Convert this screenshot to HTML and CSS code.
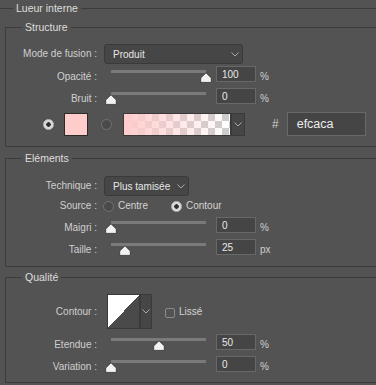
FILE: index.html
```html
<!DOCTYPE html>
<html>
<head>
    <title>Lueur interne</title>
    <link rel="stylesheet" href="styles.css">
</head>
<body>
    <fieldset class="panel">
        <legend>Lueur interne</legend>

        <!-- Structure -->
        <fieldset class="group group-structure">
            <legend>Structure</legend>

            <div class="row row-select">
                <span class="label">Mode de fusion :</span>
                <div class="select select-wide">
                    <span>Produit</span>
                    <svg width="8" height="5"><path d="M0.5 0.5 L4 4 L7.5 0.5" stroke="#a9a9a9" fill="none"/></svg>
                </div>
            </div>

            <div class="row row-slider">
                <span class="label">Opacité :</span>
                <div class="slider">
                    <div class="track"></div>
                    <span class="thumb" style="left: 100%;"><svg width="12" height="11"><path d="M6 0.8 L11.3 6 V10.4 H0.7 V6 Z" fill="#f2f2f2" stroke="#2e2e2e" stroke-width="0.8" stroke-linejoin="round"/></svg></span>
                </div>
                <div class="field">100</div>
                <span class="unit">%</span>
            </div>

            <div class="row row-slider">
                <span class="label">Bruit :</span>
                <div class="slider">
                    <div class="track"></div>
                    <span class="thumb" style="left: 0%;"><svg width="12" height="11"><path d="M6 0.8 L11.3 6 V10.4 H0.7 V6 Z" fill="#f2f2f2" stroke="#2e2e2e" stroke-width="0.8" stroke-linejoin="round"/></svg></span>
                </div>
                <div class="field">0</div>
                <span class="unit">%</span>
            </div>

            <div class="row row-color">
                <span class="radio radio-on"></span>
                <span class="swatch"></span>
                <span class="radio radio-off"></span>
                <span class="gradient"></span>
                <span class="chev-box"><svg width="8" height="5"><path d="M0.5 0.5 L4 4 L7.5 0.5" stroke="#a9a9a9" fill="none"/></svg></span>
                <span class="hash">#</span>
                <div class="hex">efcaca</div>
            </div>
        </fieldset>

        <!-- Eléments -->
        <fieldset class="group group-elements">
            <legend>Eléments</legend>

            <div class="row row-select">
                <span class="label">Technique :</span>
                <div class="select select-short">
                    <span>Plus tamisée</span>
                    <svg width="8" height="5"><path d="M0.5 0.5 L4 4 L7.5 0.5" stroke="#a9a9a9" fill="none"/></svg>
                </div>
            </div>

            <div class="row row-radio">
                <span class="label">Source :</span>
                <span class="radio radio-off"></span>
                <span class="opt opt-first">Centre</span>
                <span class="radio radio-on"></span>
                <span class="opt">Contour</span>
            </div>

            <div class="row row-slider">
                <span class="label">Maigri :</span>
                <div class="slider">
                    <div class="track"></div>
                    <span class="thumb" style="left: 0%;"><svg width="12" height="11"><path d="M6 0.8 L11.3 6 V10.4 H0.7 V6 Z" fill="#f2f2f2" stroke="#2e2e2e" stroke-width="0.8" stroke-linejoin="round"/></svg></span>
                </div>
                <div class="field">0</div>
                <span class="unit">%</span>
            </div>

            <div class="row row-slider">
                <span class="label">Taille :</span>
                <div class="slider">
                    <div class="track"></div>
                    <span class="thumb" style="left: 15%;"><svg width="12" height="11"><path d="M6 0.8 L11.3 6 V10.4 H0.7 V6 Z" fill="#f2f2f2" stroke="#2e2e2e" stroke-width="0.8" stroke-linejoin="round"/></svg></span>
                </div>
                <div class="field">25</div>
                <span class="unit">px</span>
            </div>
        </fieldset>

        <!-- Qualité -->
        <fieldset class="group group-quality">
            <legend>Qualité</legend>

            <div class="row row-curve">
                <span class="label">Contour :</span>
                <span class="curve"></span>
                <span class="chev-box chev-curve"><svg width="8" height="5"><path d="M0.5 0.5 L4 4 L7.5 0.5" stroke="#a9a9a9" fill="none"/></svg></span>
                <span class="checkbox"></span>
                <span class="opt">Lissé</span>
            </div>

            <div class="row row-slider">
                <span class="label">Etendue :</span>
                <div class="slider">
                    <div class="track"></div>
                    <span class="thumb" style="left: 50%;"><svg width="12" height="11"><path d="M6 0.8 L11.3 6 V10.4 H0.7 V6 Z" fill="#f2f2f2" stroke="#2e2e2e" stroke-width="0.8" stroke-linejoin="round"/></svg></span>
                </div>
                <div class="field">50</div>
                <span class="unit">%</span>
            </div>

            <div class="row row-slider">
                <span class="label">Variation :</span>
                <div class="slider">
                    <div class="track"></div>
                    <span class="thumb" style="left: 0%;"><svg width="12" height="11"><path d="M6 0.8 L11.3 6 V10.4 H0.7 V6 Z" fill="#f2f2f2" stroke="#2e2e2e" stroke-width="0.8" stroke-linejoin="round"/></svg></span>
                </div>
                <div class="field">0</div>
                <span class="unit">%</span>
            </div>
        </fieldset>
    </fieldset>
</body>
</html>
```

FILE: styles.css
```css
html, body {
    margin: 0;
    overflow: hidden;
}
body {
    background: #535353;
    font-family: "Liberation Sans", Arial, sans-serif;
    font-size: 10px;
    color: #cfcfcf;
}
fieldset {
    border: 1px solid #3c3c3c;
    padding: 0;
    min-inline-size: 0;
}
legend {
    font-size: 10.5px;
    line-height: 13px;
    padding: 0 3px;
    color: #dedede;
}
.panel {
    box-sizing: border-box;
    width: 378px;
    margin: 2px 0 0 -1px;
    padding-bottom: 20px;
}
.panel > legend {
    margin-left: 13px;
}
.group {
    box-sizing: border-box;
    width: 372px;
    margin: 0 0 0 5px;
}
.group > legend {
    margin-left: 16px;
}
.group-structure {
    margin-top: 6px;
    padding: 10px 0;
}
.group-elements {
    margin-top: 5px;
    padding: 11px 0 5px;
}
.group-quality {
    margin-top: 4px;
    padding: 10px 0 4px;
}

/* rows */
.row {
    display: flex;
    align-items: flex-start;
}
.label {
    width: 91px;
    margin-right: 7px;
    text-align: right;
    flex-shrink: 0;
}
.row-select {
    height: 22px;
}
.row-select .label {
    line-height: 20px;
}
.row-slider {
    height: 22px;
}
.row-slider .label,
.unit {
    line-height: 22px;
}
.row-radio {
    height: 19px;
    align-items: center;
    line-height: 16px;
}
.row-radio > * {
    margin-bottom: 3px;
}
.row-curve {
    height: 40px;
}
.row-curve .label {
    line-height: 35px;
}

/* dropdown */
.select {
    box-sizing: border-box;
    height: 20px;
    display: flex;
    align-items: center;
    justify-content: space-between;
    padding: 0 3px 0 8px;
    background: #464646;
    border: 1px solid #3a3a3a;
    border-radius: 3px;
    color: #e6e6e6;
}
.select-wide {
    width: 139px;
}
.select-short {
    width: 85px;
}

/* slider */
.slider {
    position: relative;
    width: 95px;
    height: 22px;
    margin: 0 10px 0 7px;
    flex-shrink: 0;
}
.track {
    margin-top: 4px;
    height: 3px;
    background: #7a7a7a;
}
.thumb {
    position: absolute;
    top: 6px;
    margin-left: -6px;
    width: 12px;
    height: 11px;
}
.thumb svg {
    display: block;
}
.field {
    box-sizing: border-box;
    width: 40px;
    height: 16px;
    padding: 2px 0 0 5px;
    line-height: 12px;
    background: #454545;
    border: 1px solid #686868;
    color: #e8e8e8;
    flex-shrink: 0;
}
.unit {
    margin-left: 4px;
}

/* colour row */
.row-color {
    height: 24px;
    align-items: center;
    margin-top: 2px;
}
.radio {
    box-sizing: border-box;
    width: 11px;
    height: 11px;
    border-radius: 50%;
    flex-shrink: 0;
}
.radio-on {
    background: radial-gradient(circle, #2f2f2f 0 2px, #dadada 2.5px);
    border: 1px solid #bdbdbd;
}
.radio-off {
    background: #4a4a4a;
    border: 1px solid #737373;
}
.row-color .radio-on {
    margin-left: 37px;
}
.swatch {
    box-sizing: border-box;
    width: 24px;
    height: 23px;
    margin: 0 13px 0 10px;
    background: #ffcccc;
    border: 1px solid #2b2b2b;
}
.row-color .radio-off {
    margin-right: 11px;
}
.gradient {
    box-sizing: border-box;
    width: 108px;
    height: 23px;
    border: 1px solid #3a3a3a;
    background:
        linear-gradient(to right, #ffcccc, rgba(255, 204, 204, 0)),
        conic-gradient(#ffffff 25%, #cccccc 0 50%, #ffffff 0 75%, #cccccc 0) 0 0 / 14px 14px;
}
.chev-box {
    box-sizing: border-box;
    width: 14px;
    height: 23px;
    display: flex;
    align-items: center;
    justify-content: center;
    background: #464646;
    border: 1px solid #3a3a3a;
}
.hash {
    margin: 0 8px 0 27px;
    font-size: 12px;
    color: #cfcfcf;
}
.hex {
    box-sizing: border-box;
    width: 79px;
    height: 24px;
    padding-left: 9px;
    line-height: 22px;
    font-size: 12.5px;
    background: #454545;
    border: 1px solid #686868;
    color: #ececec;
}

/* radio options */
.row-radio .label {
    margin-right: 6px;
}
.opt {
    margin-left: 4px;
    color: #d4d4d4;
}
.opt-first {
    width: 53px;
}

/* quality */
.curve {
    box-sizing: border-box;
    width: 33px;
    height: 35px;
    margin-left: 3px;
    border: 1px solid #3a3a3a;
    background: linear-gradient(to bottom right, #ffffff 50%, #4a4a4a 50%);
}
.chev-curve {
    width: 12px;
    height: 35px;
}
.checkbox {
    box-sizing: border-box;
    width: 10px;
    height: 10px;
    margin: 14px 0 0 13px;
    border: 1px solid #8a8a8a;
    border-radius: 2px;
}
.row-curve .opt {
    line-height: 35px;
}
```
